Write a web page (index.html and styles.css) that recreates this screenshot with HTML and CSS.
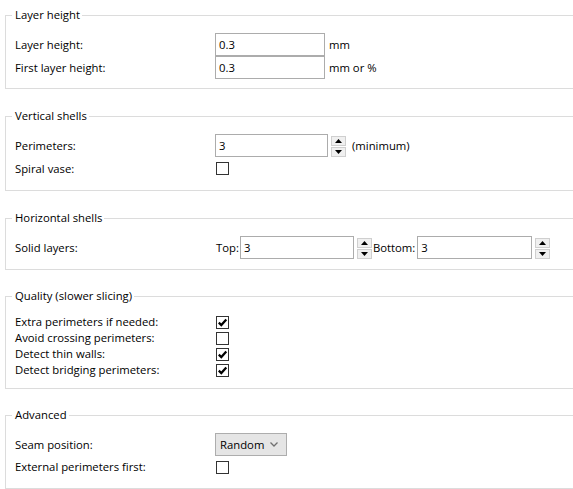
FILE: index.html
```html
<!DOCTYPE html>
<html>
<head>
<meta charset="utf-8">
<link rel="stylesheet" href="styles.css">
</head>
<body>
<div class="page">
  <fieldset class="group g1">
    <legend>Layer height</legend>
    <div class="row r23"><span class="label">Layer height:</span><span class="field w110">0.3</span><span class="unit">mm</span></div>
    <div class="row r23"><span class="label">First layer height:</span><span class="field w110">0.3</span><span class="unit">mm or %</span></div>
  </fieldset>

  <fieldset class="group g2">
    <legend>Vertical shells</legend>
    <div class="row r23"><span class="label">Perimeters:</span><span class="field w113">3</span>
      <span class="spin"><span class="spin-btn"><svg width="7" height="4" viewBox="0 0 7 4"><polygon points="0,4 7,4 3.5,0" fill="#000"/></svg></span><span class="spin-btn"><svg width="7" height="4" viewBox="0 0 7 4"><polygon points="0,0 7,0 3.5,4" fill="#000"/></svg></span></span>
      <span class="unit u-min">(minimum)</span></div>
    <div class="row r23"><span class="label">Spiral vase:</span><span class="check"></span></div>
  </fieldset>

  <fieldset class="group g3">
    <legend>Horizontal shells</legend>
    <div class="row r23"><span class="label">Solid layers:</span>
      <span class="sub sub-top">Top:</span><span class="field w114">3</span>
      <span class="spin"><span class="spin-btn"><svg width="7" height="4" viewBox="0 0 7 4"><polygon points="0,4 7,4 3.5,0" fill="#000"/></svg></span><span class="spin-btn"><svg width="7" height="4" viewBox="0 0 7 4"><polygon points="0,0 7,0 3.5,4" fill="#000"/></svg></span></span>
      <span class="sub sub-bottom">Bottom:</span><span class="field w115">3</span>
      <span class="spin"><span class="spin-btn"><svg width="7" height="4" viewBox="0 0 7 4"><polygon points="0,4 7,4 3.5,0" fill="#000"/></svg></span><span class="spin-btn"><svg width="7" height="4" viewBox="0 0 7 4"><polygon points="0,0 7,0 3.5,4" fill="#000"/></svg></span></span>
    </div>
  </fieldset>

  <fieldset class="group">
    <legend>Quality (slower slicing)</legend>
    <div class="row r16"><span class="label">Extra perimeters if needed:</span><span class="check on"><svg width="11" height="11" viewBox="0 0 11 11"><path d="M1.8 5.6 L4.3 8.1 L9.3 2.4" fill="none" stroke="#000" stroke-width="2.2"/></svg></span></div>
    <div class="row r16"><span class="label">Avoid crossing perimeters:</span><span class="check"></span></div>
    <div class="row r16"><span class="label">Detect thin walls:</span><span class="check on"><svg width="11" height="11" viewBox="0 0 11 11"><path d="M1.8 5.6 L4.3 8.1 L9.3 2.4" fill="none" stroke="#000" stroke-width="2.2"/></svg></span></div>
    <div class="row r16"><span class="label">Detect bridging perimeters:</span><span class="check on"><svg width="11" height="11" viewBox="0 0 11 11"><path d="M1.8 5.6 L4.3 8.1 L9.3 2.4" fill="none" stroke="#000" stroke-width="2.2"/></svg></span></div>
  </fieldset>

  <fieldset class="group">
    <legend>Advanced</legend>
    <div class="row r23"><span class="label">Seam position:</span><span class="select">Random<svg class="chev" width="8" height="5" viewBox="0 0 8 5"><path d="M0.5 0.5 L4 4 L7.5 0.5" fill="none" stroke="#707070" stroke-width="1.3"/></svg></span></div>
    <div class="row r22"><span class="label">External perimeters first:</span><span class="check"></span></div>
  </fieldset>
</div>
</body>
</html>
```

FILE: styles.css
```css
html, body {
  margin: 0;
  padding: 0;
  background: #ffffff;
  overflow: hidden;
}

body {
  font-family: "Open Sans", "Noto Sans", "DejaVu Sans", sans-serif;
  font-size: 11.3px;
  color: #000000;
}

.page {
  display: flex;
  flex-direction: column;
  gap: 18px;
  padding-top: 7px;
}

.group {
  margin: 0 0 0 5px;
  width: 620px;
  min-width: 0;
  box-sizing: border-box;
  border: 1px solid #dcdcdc;
  padding: 10px 0 10px 9px;
}

.g1 {
  padding-bottom: 9px;
}

.g2,
.g3 {
  margin-top: 1px;
}

.group legend {
  line-height: 16px;
  padding: 0 2px 0 3px;
  margin-left: -3px;
}

.row {
  display: flex;
  align-items: center;
}

.r23 { height: 23px; }
.r22 { height: 22px; }
.r16 { height: 16px; }

.label {
  width: 200px;
  flex: none;
  line-height: 16px;
  white-space: nowrap;
}

.field {
  box-sizing: border-box;
  height: 23px;
  border: 1px solid #acacac;
  background: #ffffff;
  padding-left: 3px;
  display: flex;
  align-items: center;
  flex: none;
}

.w110 { width: 110px; }
.w113 { width: 113px; }
.w114 { width: 114px; }
.w115 { width: 115px; }

.unit {
  margin-left: 4px;
  white-space: nowrap;
}

.u-min {
  margin-left: 6px;
}

.spin {
  display: flex;
  flex-direction: column;
  gap: 1px;
  width: 15px;
  margin-left: 3px;
  margin-top: 2px;
  flex: none;
}

.spin-btn {
  box-sizing: border-box;
  height: 10px;
  border: 1px solid #cfcfcf;
  background: #f0f0f0;
  display: flex;
  align-items: center;
  justify-content: center;
}

.spin-btn svg {
  display: block;
}

.sub {
  white-space: nowrap;
}

.sub-top {
  margin-left: 1px;
  margin-right: 1px;
}

.sub-bottom {
  margin-left: 1px;
  margin-right: 2px;
}

.check {
  box-sizing: border-box;
  width: 13px;
  height: 13px;
  border: 1px solid #333333;
  background: #ffffff;
  margin-left: 1px;
  display: flex;
  align-items: center;
  justify-content: center;
  flex: none;
}

.check svg {
  display: block;
}

.select {
  box-sizing: border-box;
  width: 72px;
  height: 23px;
  border: 1px solid #adadad;
  background: #e5e5e5;
  padding-left: 4px;
  padding-right: 8px;
  display: flex;
  align-items: center;
  justify-content: space-between;
  flex: none;
}

.chev {
  display: block;
}
```
